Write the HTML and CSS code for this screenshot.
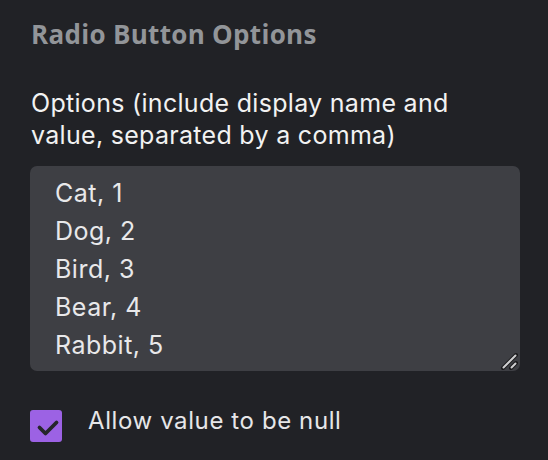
FILE: index.html
```html
<!DOCTYPE html>
<html>
<head>
<meta charset="utf-8">
<link rel="stylesheet" href="styles.css">
</head>
<body>
<div class="panel">
  <h2 class="title">Radio Button Options</h2>
  <label class="label" for="opts">Options (include display name and value, separated by a comma)</label>
  <div class="field">
    <textarea id="opts" class="opts">Cat, 1
Dog, 2
Bird, 3
Bear, 4
Rabbit, 5</textarea>
    <svg class="grip" width="18" height="18" viewBox="0 0 18 18">
      <path d="M3 16 L16 3" stroke="#1a1a1c" stroke-width="4" stroke-linecap="round"/>
      <path d="M11 16 L16 11" stroke="#1a1a1c" stroke-width="4" stroke-linecap="round"/>
      <path d="M3.5 15.5 L15.5 3.5" stroke="#cfcfd1" stroke-width="2" stroke-linecap="round"/>
      <path d="M11.5 15.5 L15.5 11.5" stroke="#cfcfd1" stroke-width="2" stroke-linecap="round"/>
    </svg>
  </div>
  <label class="check">
    <span class="box"><svg width="32" height="32" viewBox="0 0 32 32"><path d="M9.5 17.5 L15.5 23.5 L26.5 12.5" fill="none" stroke="#26262b" stroke-width="3.8" stroke-linecap="round" stroke-linejoin="round"/></svg></span>
    <span class="check-text">Allow value to be null</span>
  </label>
</div>
</body>
</html>
```
FILE: styles.css
```css
html, body {
  margin: 0;
  padding: 0;
  background: #212226;
  height: 100%;
}
.panel {
  padding: 17px 28px 0 30px;
  display: flex;
  flex-direction: column;
  font-family: Inter, "Liberation Sans", sans-serif;
}
.title {
  margin: 0;
  font-family: "Open Sans", Lato, sans-serif;
  font-weight: 700;
  font-size: 26px;
  letter-spacing: 0.3px;
  line-height: 35px;
  color: #929599;
  padding-left: 1px;
}
.label {
  margin-top: 35px;
  font-size: 25px;
  line-height: 32px;
  color: #f2f2f2;
  padding-left: 1px;
  letter-spacing: 0.3px;
  max-width: 460px;
}
.field {
  position: relative;
  margin-top: 15px;
  display: flex;
}
.opts {
  box-sizing: border-box;
  height: 205px;
  width: 100%;
  background: #3e3f44;
  border: none;
  border-radius: 7px;
  color: #e8e8ea;
  font-family: Inter, "Liberation Sans", sans-serif;
  font-size: 25px;
  letter-spacing: 0.5px;
  line-height: 38px;
  padding: 8px 20px 7px 25px;
  resize: none;
  outline: none;
  overflow: hidden;
}
.grip {
  position: absolute;
  right: 2px;
  bottom: 1px;
}
.check {
  margin-top: 35px;
  display: flex;
  align-items: flex-start;
  gap: 26px;
}
.box {
  margin-top: 4px;
  width: 32px;
  height: 32px;
  border-radius: 3px;
  background: #9c62e4;
  display: flex;
}
.check-text {
  font-size: 24px;
  letter-spacing: 0.6px;
  color: #e6e6e8;
  line-height: 30px;
}
```
